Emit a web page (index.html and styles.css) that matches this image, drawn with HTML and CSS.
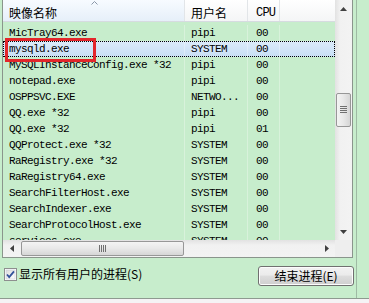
FILE: index.html
```html
<!DOCTYPE html>
<html>
<head>
<meta charset="utf-8">
<link rel="stylesheet" href="styles.css">
</head>
<body>
<div class="window">
  <div class="top">
    <div class="page">
      <div class="list">
        <div class="list-main">
          <div class="header">
            <div class="hcol c1 sorted">映像名称<svg class="sort" width="7" height="4" viewBox="0 0 7 4"><path d="M0.5 3.5 L3.5 0.5 L6.5 3.5" fill="none" stroke="#8a97a8" stroke-width="1"/></svg></div>
            <div class="hcol c2">用户名</div>
            <div class="hcol c3 mono">CPU</div>
            <div class="hcol fill"></div>
          </div>
          <div class="rows">
            <div class="row"><span class="c1">MicTray64.exe</span><span class="c2">pipi</span><span class="c3">00</span></div>
            <div class="row selected"><span class="c1">mysqld.exe</span><span class="c2">SYSTEM</span><span class="c3">00</span></div>
            <div class="row"><span class="c1">MySQLInstanceConfig.exe *32</span><span class="c2">pipi</span><span class="c3">00</span></div>
            <div class="row"><span class="c1">notepad.exe</span><span class="c2">pipi</span><span class="c3">00</span></div>
            <div class="row"><span class="c1">OSPPSVC.EXE</span><span class="c2">NETWO...</span><span class="c3">00</span></div>
            <div class="row"><span class="c1">QQ.exe *32</span><span class="c2">pipi</span><span class="c3">00</span></div>
            <div class="row"><span class="c1">QQ.exe *32</span><span class="c2">pipi</span><span class="c3">01</span></div>
            <div class="row"><span class="c1">QQProtect.exe *32</span><span class="c2">SYSTEM</span><span class="c3">00</span></div>
            <div class="row"><span class="c1">RaRegistry.exe *32</span><span class="c2">SYSTEM</span><span class="c3">00</span></div>
            <div class="row"><span class="c1">RaRegistry64.exe</span><span class="c2">SYSTEM</span><span class="c3">00</span></div>
            <div class="row"><span class="c1">SearchFilterHost.exe</span><span class="c2">SYSTEM</span><span class="c3">00</span></div>
            <div class="row"><span class="c1">SearchIndexer.exe</span><span class="c2">SYSTEM</span><span class="c3">00</span></div>
            <div class="row"><span class="c1">SearchProtocolHost.exe</span><span class="c2">SYSTEM</span><span class="c3">00</span></div>
            <div class="row"><span class="c1">services.exe</span><span class="c2">SYSTEM</span><span class="c3">00</span></div>
          </div>
          <div class="mark"></div>
        </div>
        <div class="vscroll">
          <div class="sbtn"><svg width="7" height="4" viewBox="0 0 7 4"><path d="M0 4 L3.5 0 L7 4 Z" fill="#404040"/></svg></div>
          <div class="vtrack">
            <div class="vthumb"><svg width="7" height="8" viewBox="0 0 7 8"><path d="M0 0.5 H7 M0 2.5 H7 M0 4.5 H7 M0 6.5 H7" stroke="#707070" stroke-width="1"/></svg></div>
          </div>
          <div class="sbtn"><svg width="7" height="4" viewBox="0 0 7 4"><path d="M0 0 L3.5 4 L7 0 Z" fill="#404040"/></svg></div>
        </div>
        <div class="hscroll">
          <div class="sbtn"><svg width="4" height="7" viewBox="0 0 4 7"><path d="M4 0 L0 3.5 L4 7 Z" fill="#404040"/></svg></div>
          <div class="htrack">
            <div class="hthumb"><svg width="8" height="7" viewBox="0 0 8 7"><path d="M0.5 0 V7 M2.5 0 V7 M4.5 0 V7 M6.5 0 V7" stroke="#707070" stroke-width="1"/></svg></div>
          </div>
          <div class="sbtn"><svg width="4" height="7" viewBox="0 0 4 7"><path d="M0 0 L4 3.5 L0 7 Z" fill="#404040"/></svg></div>
        </div>
        <div class="corner"></div>
      </div>
      <div class="footer">
        <label class="check">
          <svg class="box" width="13" height="13" viewBox="0 0 13 13">
            <defs><linearGradient id="cg" x1="0" y1="0" x2="1" y2="1"><stop offset="0" stop-color="#dcdcdc"/><stop offset="1" stop-color="#ffffff"/></linearGradient></defs>
            <rect x="0.5" y="0.5" width="12" height="12" fill="#fff" stroke="#8e8f8f"/>
            <rect x="2" y="2" width="9" height="9" fill="url(#cg)" stroke="#c8cdd6" stroke-width="0.6"/>
            <path d="M3 6.5 L5.2 9 L10 3.3" fill="none" stroke="#33529a" stroke-width="1.8"/>
          </svg>
          <span>显示所有用户的进程(S)</span>
        </label>
        <button class="btn">结束进程(E)</button>
      </div>
    </div>
    <div class="side"></div>
  </div>
  <div class="bottom"></div>
</div>
</body>
</html>
```

FILE: styles.css
```css
html, body {
  margin: 0;
  padding: 0;
}
body {
  background: #c7edcc;
  font-family: "Noto Sans CJK SC", sans-serif;
  font-size: 12px;
  color: #000;
  width: 369px;
  height: 303px;
  overflow: hidden;
}
.window {
  display: flex;
  flex-direction: column;
  height: 303px;
}
.top {
  display: flex;
  height: 298px;
}
.page {
  width: 356px;
  border-right: 1px solid #9fbaa4;
  display: flex;
  flex-direction: column;
}
.side {
  flex: 1;
}
.bottom {
  flex: 1;
  border-top: 1px solid #8e9a90;
  background: #f5f3f5;
}
.list {
  margin-left: 2px;
  width: 349px;
  border-left: 1px solid #8a958c;
  border-right: 1px solid #8a958c;
  border-bottom: 1px solid #8a958c;
  display: grid;
  grid-template-columns: 332px 17px;
  grid-template-rows: 240px 17px;
}
.list-main {
  position: relative;
  overflow: hidden;
}
.mono, .rows {
  font-family: "Liberation Mono", monospace;
  font-size: 11px;
  letter-spacing: -0.6px;
}
.header {
  display: flex;
  height: 22px;
  border-bottom: 1px solid #d6dbe0;
  box-sizing: border-box;
}
.hcol {
  box-sizing: border-box;
  height: 21px;
  padding: 5px 0 0 6px;
  line-height: 16px;
  border-right: 1px solid #e2e5e8;
  background: linear-gradient(#ffffff, #f4f5f6);
  position: relative;
}
.hcol.sorted {
  background: linear-gradient(#f7fbff, #e6eff9);
}
.hcol.c3 {
  padding-left: 8px;
  font-size: 12px;
  letter-spacing: -0.8px;
}
.hcol.fill {
  flex: 1;
  border-right: none;
}
.sort {
  position: absolute;
  left: 88px;
  top: 1px;
}
.c1 { width: 182px; }
.c2 { width: 63px; }
.c3 { width: 32px; }
.rows {
  padding-top: 3px;
}
.row {
  display: flex;
  height: 16px;
  line-height: 17px;
  box-sizing: border-box;
  white-space: nowrap;
}
.row span {
  box-sizing: border-box;
  padding-left: 6px;
  border-right: 1px solid rgba(255, 255, 255, 0.3);
  overflow: hidden;
}
.row span.c3 {
  padding-left: 8px;
}
.row.selected {
  background: linear-gradient(#dcebfa, #c8dff5);
  outline: 1px dotted #000;
  outline-offset: -1px;
}
.mark {
  position: absolute;
  left: 2px;
  top: 38px;
  width: 91px;
  height: 24px;
  box-sizing: border-box;
  border: 3px solid #e3262b;
}
.vscroll {
  display: flex;
  flex-direction: column;
  background: linear-gradient(to right, #e2e2e2, #f1f1f1 30%, #f3f3f3);
}
.hscroll {
  display: flex;
  background: linear-gradient(#e2e2e2, #f1f1f1 30%, #f3f3f3);
}
.corner {
  background: #eeeeee;
}
.sbtn {
  width: 17px;
  height: 17px;
  flex: none;
  display: flex;
  align-items: center;
  justify-content: center;
}
.vtrack {
  flex: 1;
  position: relative;
  display: flex;
  flex-direction: column;
  padding-top: 76px;
}
.vthumb {
  width: 15px;
  height: 34px;
  margin-left: 1px;
  box-sizing: border-box;
  border: 1px solid #979797;
  border-radius: 2px;
  background: linear-gradient(to right, #f4f4f4, #e8e8e8 50%, #d6d6d6);
  display: flex;
  align-items: center;
  justify-content: center;
}
.htrack {
  flex: 1;
  display: flex;
  padding-left: 1px;
}
.hthumb {
  width: 163px;
  height: 15px;
  margin-top: 1px;
  box-sizing: border-box;
  border: 1px solid #979797;
  border-radius: 2px;
  background: linear-gradient(#f4f4f4, #e8e8e8 50%, #d6d6d6);
  display: flex;
  align-items: center;
  justify-content: center;
}
.footer {
  display: flex;
  justify-content: space-between;
  align-items: flex-start;
  margin-left: 2px;
  width: 352px;
  padding-top: 8px;
}
.check {
  display: flex;
  align-items: center;
  gap: 2px;
  margin-left: 2px;
  margin-top: 1px;
  line-height: 14px;
}
.box {
  flex: none;
}
.btn {
  width: 96px;
  height: 20px;
  padding: 0;
  font-family: "Noto Sans CJK SC", sans-serif;
  font-size: 12px;
  line-height: 18px;
  color: #000;
  border: 1px solid #707070;
  border-radius: 3px;
  background: linear-gradient(#f2f2f2, #ebebeb 45%, #dddddd 50%, #cfcfcf);
  box-shadow: inset 0 0 0 1px #fcfcfc;
}
```
